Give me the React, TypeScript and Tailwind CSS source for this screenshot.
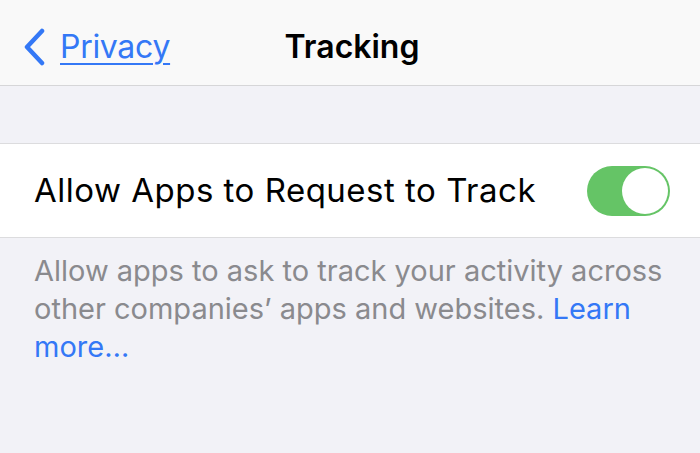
import React, { useState } from 'react';

export default function App() {
  const [allowTracking, setAllowTracking] = useState(true);

  return (
    <div className="w-[700px] h-[453px] bg-[#f2f2f7] overflow-hidden" style={{ fontFamily: 'Inter, "Liberation Sans", sans-serif' }}>
      {/* Nav bar */}
      <div className="relative h-[86px] pt-[8px] bg-[#f9f9f9] border-b border-[#d6d6d8] flex items-center">
        <button className="flex items-center gap-[14px] pl-[22px] text-[#3478f6]">
          <svg width="24" height="38" viewBox="0 0 24 38" fill="none">
            <path d="M20 3 L5 19 L20 35" stroke="#3478f6" strokeWidth="4.5" strokeLinecap="round" strokeLinejoin="round" />
          </svg>
          <span className="text-[32px] underline decoration-[2px] underline-offset-[5px] tracking-[-0.3px]">Privacy</span>
        </button>
        <h1 className="absolute left-0 right-0 text-center pl-[4px] text-[32px] font-semibold text-black pointer-events-none">
          Tracking
        </h1>
      </div>

      <div className="h-[57px]" />

      {/* Toggle row */}
      <div className="h-[95px] bg-white border-y border-[#dcdcde] flex items-center justify-between pl-[34px] pr-[30px]">
        <span className="text-[33px] text-black tracking-[0.5px]">Allow Apps to Request to Track</span>
        <button
          onClick={() => setAllowTracking(v => !v)}
          className={`relative w-[83px] h-[50px] rounded-full ${allowTracking ? 'bg-[#65c466]' : 'bg-[#e9e9eb]'}`}
        >
          <span
            className={`absolute top-[2px] w-[46px] h-[46px] rounded-full bg-white ${allowTracking ? 'left-[35px]' : 'left-[2px]'}`}
          />
        </button>
      </div>

      {/* Footer */}
      <p className="px-[34px] pt-[14px] text-[29px] leading-[38px] text-[#8a8a8e]">
        Allow apps to ask to track your activity across other companies’ apps and websites.{' '}
        <span className="text-[#3478f6]">Learn more…</span>
      </p>
    </div>
  );
}
